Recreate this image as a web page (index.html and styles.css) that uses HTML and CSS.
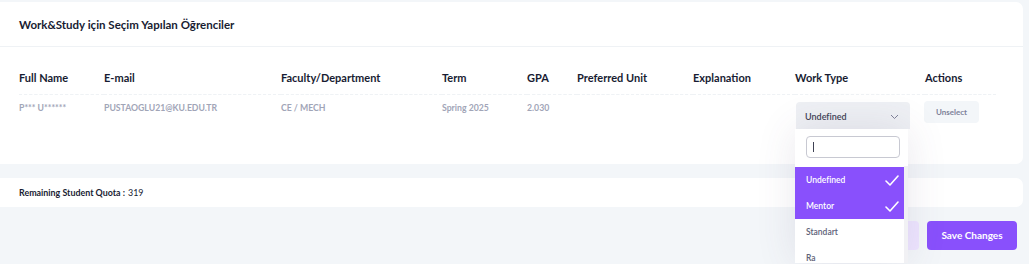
FILE: index.html
```html
<!DOCTYPE html>
<html lang="tr">
<head>
  <meta charset="UTF-8" />
  <title>Work&amp;Study Seçim</title>
  <link rel="stylesheet" href="styles.css">
</head>
<body>
  <div class="page">
    <div class="card">
      <div class="card-header">
        <h3>Work&amp;Study için Seçim Yapılan Öğrenciler</h3>
      </div>
      <div class="card-body">
        <table class="students">
          <thead>
            <tr>
              <th class="c-name">Full Name</th>
              <th class="c-mail">E-mail</th>
              <th class="c-fac">Faculty/Department</th>
              <th class="c-term">Term</th>
              <th class="c-gpa">GPA</th>
              <th class="c-unit">Preferred Unit</th>
              <th class="c-exp">Explanation</th>
              <th class="c-type">Work Type</th>
              <th class="c-act">Actions</th>
            </tr>
          </thead>
          <tbody>
            <tr>
              <td>P*** U******</td>
              <td>PUSTAOGLU21@KU.EDU.TR</td>
              <td>CE / MECH</td>
              <td>Spring 2025</td>
              <td>2.030</td>
              <td></td>
              <td></td>
              <td class="type-cell">
                <div class="select">
                  <span>Undefined</span>
                  <svg width="9" height="6" viewBox="0 0 9 6"><path d="M1 1l3.5 3.5L8 1" fill="none" stroke="#7e8299" stroke-width="1"/></svg>
                </div>
                <div class="dropdown">
                  <div class="search"><input type="text" value="" /><span class="caret"></span></div>
                  <ul class="options">
                    <li class="picked">Undefined
                      <svg width="14" height="11" viewBox="0 0 14 11"><path d="M1 6l4 4L13 1" fill="none" stroke="#fff" stroke-width="1.6" stroke-linecap="round" stroke-linejoin="round"/></svg>
                    </li>
                    <li class="picked">Mentor
                      <svg width="14" height="11" viewBox="0 0 14 11"><path d="M1 6l4 4L13 1" fill="none" stroke="#fff" stroke-width="1.6" stroke-linecap="round" stroke-linejoin="round"/></svg>
                    </li>
                    <li>Standart</li>
                    <li>Ra</li>
                  </ul>
                  <div class="scrollbar"></div>
                </div>
              </td>
              <td><button class="btn-light">Unselect</button></td>
            </tr>
          </tbody>
        </table>
      </div>
    </div>

    <div class="card quota">
      <strong>Remaining Student Quota :</strong> 319
    </div>

    <div class="actions">
      <button class="btn-soft">Cancel</button>
      <button class="btn-primary">Save Changes</button>
    </div>
  </div>
</body>
</html>
```

FILE: styles.css
```css
:root {
  --bg: #f3f6f9;
  --dark: #181c32;
  --muted: #a1a5b7;
  --primary: #8950fc;
}

body {
  margin: 0;
  min-height: 100vh;
  background: var(--bg);
  font-family: "Lato", sans-serif;
  color: var(--dark);
  overflow: hidden;
}

.page {
  margin: 2px 6px 0 -8px;
}

.card {
  background: #fff;
  border-radius: 7px;
}

.card-header {
  height: 44px;
  display: flex;
  align-items: center;
  padding-left: 27px;
  border-bottom: 1px solid #eff2f5;
}

.card-header h3 {
  margin: 0;
  font-size: 11.5px;
  font-weight: 700;
}

.card-body {
  padding: 0 27px 11px;
}

.students {
  width: 100%;
  border-collapse: collapse;
  text-align: left;
}

.students th {
  font-size: 11px;
  font-weight: 700;
  padding: 24px 0 10px;
  border-bottom: 1px dashed #eff2f5;
  white-space: nowrap;
}

.students td {
  font-size: 8.7px;
  font-weight: 700;
  color: var(--muted);
  vertical-align: top;
  padding: 7px 0 0;
  height: 58px;
  box-sizing: border-box;
}

.c-name { width: 85px; }
.c-mail { width: 177px; }
.c-fac  { width: 161px; }
.c-term { width: 85px; }
.c-gpa  { width: 50px; }
.c-unit { width: 116px; }
.c-exp  { width: 102px; }
.c-type { width: 130px; }

.type-cell {
  position: relative;
}

.select {
  width: 114px;
  height: 27px;
  margin-left: 1px;
  box-sizing: border-box;
  background: #eef0f4;
  border-radius: 4px 4px 0 0;
  display: flex;
  align-items: center;
  justify-content: space-between;
  padding: 2px 11px 0 9px;
  font-size: 9px;
  font-weight: 600;
  color: #3f4254;
}

.dropdown {
  position: absolute;
  top: 34px;
  left: 0;
  width: 113px;
  height: 134px;
  overflow: hidden;
  background: #fff;
  box-shadow: 0 0 40px rgba(82, 63, 105, 0.12);
  z-index: 5;
}

.search {
  position: relative;
  margin: 7px 8px 0 11px;
}

.search input {
  display: block;
  width: 94px;
  height: 22px;
  box-sizing: border-box;
  border: 1px solid #c8c9d2;
  border-radius: 4px;
  outline: none;
}

.caret {
  position: absolute;
  left: 7px;
  top: 6px;
  width: 1px;
  height: 10px;
  background: #3f4254;
}

.options {
  list-style: none;
  margin: 9px 4px 0 0;
  padding: 0;
}

.options li {
  height: 26px;
  display: flex;
  align-items: center;
  justify-content: space-between;
  padding: 0 5px 0 11px;
  font-size: 8.5px;
  font-weight: 600;
  color: #5e6278;
}

.options li.picked {
  background: var(--primary);
  color: #fff;
}

.scrollbar {
  position: absolute;
  right: 0;
  top: 37px;
  bottom: 0;
  width: 4px;
  background: #f1f1f4;
}

.btn-light {
  margin-top: -1px;
  margin-left: -1px;
  width: 55px;
  height: 22px;
  border: none;
  border-radius: 4px;
  background: var(--bg);
  font-family: inherit;
  font-size: 8px;
  font-weight: 700;
  color: #7e8299;
}

.quota {
  margin-top: 14px;
  height: 29px;
  display: flex;
  align-items: center;
  padding-left: 27px;
  font-size: 8.9px;
  color: var(--dark);
}

.quota strong {
  margin-right: 3px;
}

.actions {
  display: flex;
  justify-content: flex-end;
  gap: 8px;
  margin-top: 14px;
  padding-right: 6px;
}

.actions button {
  height: 29px;
  border: none;
  border-radius: 4px;
  font-family: inherit;
  font-size: 10px;
  font-weight: 700;
}

.btn-soft {
  width: 90px;
  background: #eee5ff;
  color: var(--primary);
}

.btn-primary {
  width: 90px;
  background: var(--primary);
  color: #fff;
}
```
